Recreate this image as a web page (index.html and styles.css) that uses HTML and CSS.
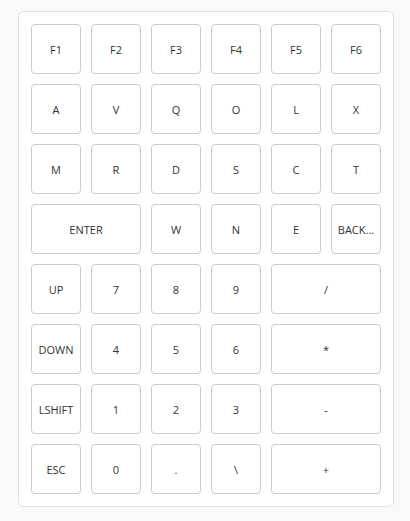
FILE: index.html
```html
<!DOCTYPE html>
<html>
<head>
<meta charset="utf-8">
<link rel="stylesheet" href="styles.css">
</head>
<body>
<div class="pad">
  <button class="key">F1</button>
  <button class="key">F2</button>
  <button class="key">F3</button>
  <button class="key">F4</button>
  <button class="key">F5</button>
  <button class="key">F6</button>
  <button class="key">A</button>
  <button class="key">V</button>
  <button class="key">Q</button>
  <button class="key">O</button>
  <button class="key">L</button>
  <button class="key">X</button>
  <button class="key">M</button>
  <button class="key">R</button>
  <button class="key">D</button>
  <button class="key">S</button>
  <button class="key">C</button>
  <button class="key">T</button>
  <button class="key wide">ENTER</button>
  <button class="key">W</button>
  <button class="key">N</button>
  <button class="key">E</button>
  <button class="key">BACK...</button>
  <button class="key">UP</button>
  <button class="key">7</button>
  <button class="key">8</button>
  <button class="key">9</button>
  <button class="key wide">/</button>
  <button class="key">DOWN</button>
  <button class="key">4</button>
  <button class="key">5</button>
  <button class="key">6</button>
  <button class="key wide">*</button>
  <button class="key">LSHIFT</button>
  <button class="key">1</button>
  <button class="key">2</button>
  <button class="key">3</button>
  <button class="key wide">-</button>
  <button class="key">ESC</button>
  <button class="key">0</button>
  <button class="key">.</button>
  <button class="key">\</button>
  <button class="key wide">+</button>
</div>
</body>
</html>
```

FILE: styles.css
```css
html, body {
  margin: 0;
  padding: 0;
  background: #f9f9f9;
}
body {
  padding: 11px 0 0 18px;
  font-family: "Open Sans", "Noto Sans", sans-serif;
}
.pad {
  box-sizing: border-box;
  width: 376px;
  background: #ffffff;
  border: 1px solid #e0e0e0;
  border-radius: 6px;
  padding: 12px;
  display: grid;
  grid-template-columns: repeat(6, 50px);
  grid-auto-rows: 50px;
  gap: 10px;
}
.key {
  box-sizing: border-box;
  margin: 0;
  padding: 0;
  background: #ffffff;
  border: 1px solid #cccccc;
  border-radius: 4px;
  font-family: "Open Sans", "Noto Sans", sans-serif;
  font-size: 11px;
  color: #333333;
  display: flex;
  align-items: center;
  justify-content: center;
  white-space: nowrap;
  overflow: hidden;
}
.wide {
  grid-column: span 2;
}
```
